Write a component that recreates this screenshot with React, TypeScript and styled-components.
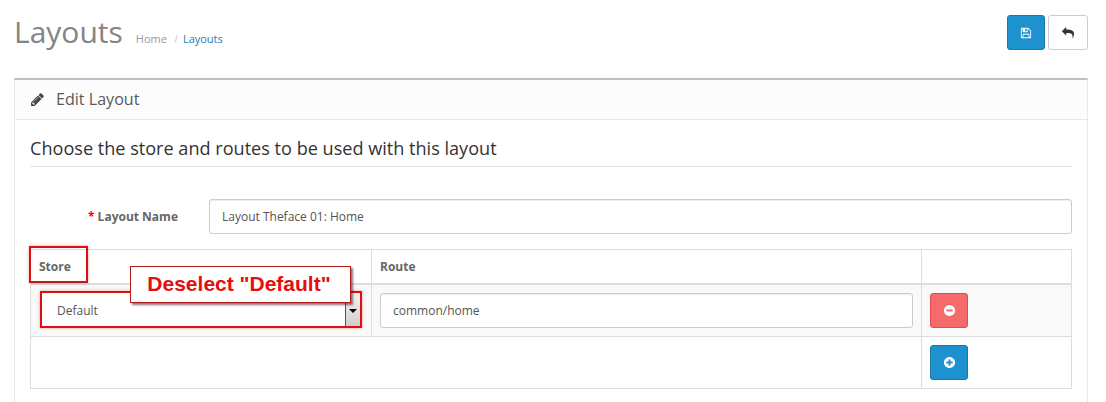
import React from 'react';
import styled, { createGlobalStyle, css } from 'styled-components';

const GlobalStyle = createGlobalStyle`
  *, *::before, *::after { box-sizing: border-box; }
  body {
    margin: 0;
    background: #fff;
    color: #666;
    font: 12px/20px "Open Sans", "Noto Sans", sans-serif;
    overflow: hidden;
  }
`;

const ICONS = {
  save: 'M512 1536h768v-384h-768v384zm896 0h128v-896q0-14-10-38.5t-20-34.5l-281-281q-10-10-34-20t-39-10v416q0 40-28 68t-68 28h-576q-40 0-68-28t-28-68v-416h-128v1280h128v-416q0-40 28-68t68-28h832q40 0 68 28t28 68v416zm-384-928v-320q0-13-9.5-22.5t-22.5-9.5h-192q-13 0-22.5 9.5t-9.5 22.5v320q0 13 9.5 22.5t22.5 9.5h192q13 0 22.5-9.5t9.5-22.5zm640 32v928q0 40-28 68t-68 28h-1344q-40 0-68-28t-28-68v-1344q0-40 28-68t68-28h928q40 0 88 20t76 48l280 280q28 28 48 76t20 88z',
  reply: 'M1792 1120q0 166-127 451-3 7-10.5 24t-13.5 30-13 22q-12 17-28 17-15 0-23.5-10t-8.5-25q0-9 2.5-26.5t2.5-23.5q5-68 5-123 0-101-17.5-181t-48.5-138.5-80-101-105.5-69.5-133-42.5-154-21.5-175.5-6h-224v256q0 26-19 45t-45 19-45-19l-512-512q-19-19-19-45t19-45l512-512q19-19 45-19t45 19 19 45v256h224q713 0 875 403 53 134 53 333z',
  pencil: 'M491 1536l91-91-235-235-91 91v107h128v128h107zm523-928q0-22-22-22-10 0-17 7l-542 542q-7 7-7 17 0 22 22 22 10 0 17-7l542-542q7-7 7-17zm-54-192l416 416-832 832h-416v-416zm683 96q0 53-37 90l-166 166-416-416 166-165q36-38 90-38 53 0 91 38l235 234q37 39 37 91z',
  minus: 'M1344 960v-128q0-26-19-45t-45-19h-768q-26 0-45 19t-19 45v128q0 26 19 45t45 19h768q26 0 45-19t19-45zm320-64q0 209-103 385.5t-279.5 279.5-385.5 103-385.5-103-279.5-279.5-103-385.5 103-385.5 279.5-279.5 385.5-103 385.5 103 279.5 279.5 103 385.5z',
  plus: 'M1344 960v-128q0-26-19-45t-45-19h-256v-256q0-26-19-45t-45-19h-128q-26 0-45 19t-19 45v256h-256q-26 0-45 19t-19 45v128q0 26 19 45t45 19h256v256q0 26 19 45t45 19h128q26 0 45-19t19-45v-256h256q26 0 45-19t19-45zm320-64q0 209-103 385.5t-279.5 279.5-385.5 103-385.5-103-279.5-279.5-103-385.5 103-385.5 279.5-279.5 385.5-103 385.5 103 279.5 279.5 103 385.5z',
};

const Icon = ({ name, size = 13 }: { name: keyof typeof ICONS; size?: number }) => (
  <svg width={size} height={size} viewBox="0 0 1792 1792" fill="currentColor" aria-hidden="true">
    <path d={ICONS[name]} />
  </svg>
);

const Page = styled.main`
  width: 1106px;
  height: 402px;
  padding: 15px 18px 0 14px;
  overflow: hidden;
`;

const PageHeader = styled.header`
  display: flex;
  align-items: flex-start;
  height: 63px;
`;

const Title = styled.h1`
  margin: 0;
  font-size: 30px;
  line-height: 34px;
  font-weight: 400;
  color: #848484;
`;

const Breadcrumb = styled.nav`
  display: flex;
  margin: 14px 0 0 13px;
  font-size: 11px;
  color: #999;
`;

const Separator = styled.span`
  width: 16px;
  padding-left: 7px;
  color: #ccc;
`;

const Crumb = styled.a<{ $active?: boolean }>`
  color: ${p => (p.$active ? '#1e7bb5' : '#999')};
`;

const Actions = styled.div`
  display: flex;
  gap: 3px;
  margin-left: auto;
`;

const tones = {
  primary: css`color: #fff; background: #1e91cf; border-color: #1978ab;`,
  danger: css`color: #fff; background: #f56b6b; border-color: #e44c4c;`,
  plain: css`color: #333; background: #fff; border-color: #ccc;`,
};

const Button = styled.button<{ $tone: keyof typeof tones }>`
  display: flex;
  align-items: center;
  justify-content: center;
  width: ${p => (p.$tone === 'plain' ? 40 : 38)}px;
  height: 35px;
  padding: 0;
  border: 1px solid;
  border-radius: 3px;
  ${p => tones[p.$tone]}
`;

const Panel = styled.section`
  height: 400px;
  border: 1px solid #e8e8e8;
  border-top: 2px solid #bfbfbf;
`;

const PanelHeading = styled.div`
  display: flex;
  align-items: center;
  gap: 11px;
  height: 40px;
  padding-left: 15px;
  border-bottom: 1px solid #e8e8e8;
  background: #fcfcfc;
  color: #444;
`;

const PanelTitle = styled.h3`
  margin: -2px 0 0;
  font-size: 16.1px;
  font-weight: 400;
  color: #595959;
`;

const PanelBody = styled.div`
  padding: 15px 15px 0;
`;

const Legend = styled.h2`
  height: 32px;
  margin: 0 0 32px;
  border-bottom: 1px solid #e5e5e5;
  font-size: 18.1px;
  line-height: 27px;
  font-weight: 400;
  color: #333;
`;

const FormRow = styled.div`
  display: grid;
  grid-template-columns: 148px 1fr;
  column-gap: 31px;
  align-items: center;
  margin-bottom: 15px;
`;

const Label = styled.label`
  text-align: right;
  font-weight: 700;
`;

const Required = styled.span`
  color: #f00;
`;

const TextInput = styled.input`
  display: block;
  width: 100%;
  height: 35px;
  padding: 0 12px;
  border: 1px solid #ccc;
  border-radius: 3px;
  background: #fff;
  box-shadow: inset 0 1px 1px rgba(0, 0, 0, 0.075);
  color: #555;
  font: inherit;
`;

const Table = styled.div`
  position: relative;
  border: 1px solid #ddd;
`;

const Row = styled.div<{ $kind?: 'head' | 'striped' }>`
  display: grid;
  grid-template-columns: 341px 550px 1fr;
  height: ${p => (p.$kind === 'head' ? 35 : p.$kind === 'striped' ? 52 : 51)}px;
  border-bottom: ${p => (p.$kind === 'head' ? '2px' : p.$kind ? '1px' : '0')} solid #ddd;
  background: ${p => (p.$kind === 'striped' ? '#f9f9f9' : '#fff')};
  font-weight: ${p => (p.$kind === 'head' ? 700 : 400)};
`;

const Cell = styled.div<{ $wide?: boolean }>`
  display: flex;
  align-items: center;
  grid-column: ${p => (p.$wide ? 'span 2' : 'auto')};
  padding: 0 8px;
  border-right: 1px solid #ddd;

  &:last-child { border-right: 0; }
`;

const SelectBox = styled.div`
  display: flex;
  justify-content: space-between;
  width: 322px;
  height: 37px;
  margin: -2px 0 0 1px;
  padding-left: 15px;
  border: 2px solid #dc1010;
  background: #fff;
  box-shadow: 0 0 3px rgba(220, 16, 16, 0.4);
  line-height: 36px;
  color: #555;
`;

const SelectArrow = styled.span`
  display: flex;
  align-items: center;
  justify-content: center;
  width: 15px;
  border-left: 1px solid #555;
  background: linear-gradient(#f4f4f4, #cfcfcf);

  &::before {
    content: '';
    margin-top: 3px;
    border: 4px solid transparent;
    border-top-color: #000;
    border-bottom: 0;
  }
`;

const Highlight = styled.div`
  position: absolute;
  top: -4px;
  left: -2px;
  width: 59px;
  height: 37px;
  border: 2px solid #dc1010;
  border-bottom-color: #b51c1c;
  box-shadow: 0 0 3px rgba(220, 16, 16, 0.4);
`;

const Callout = styled.div`
  position: absolute;
  top: 16px;
  left: 99px;
  width: 221px;
  height: 37px;
  padding-right: 3px;
  border: 1px solid #b01c1c;
  background: #fff;
  box-shadow: 2px 2px 2px rgba(70, 20, 20, 0.6);
  color: #e60d0d;
  font: 700 21px/34px "Liberation Sans", Arial, sans-serif;
  text-align: center;
  white-space: nowrap;
`;

export default function App() {
  return (
    <>
      <GlobalStyle />
      <Page>
        <PageHeader>
          <Title>Layouts</Title>
          <Breadcrumb>
            <Crumb>Home</Crumb>
            <Separator>/</Separator>
            <Crumb $active>Layouts</Crumb>
          </Breadcrumb>
          <Actions>
            <Button $tone="primary" aria-label="Save"><Icon name="save" size={12} /></Button>
            <Button $tone="plain" aria-label="Back"><Icon name="reply" size={12} /></Button>
          </Actions>
        </PageHeader>
        <Panel>
          <PanelHeading>
            <Icon name="pencil" size={15} />
            <PanelTitle>Edit Layout</PanelTitle>
          </PanelHeading>
          <PanelBody>
            <Legend>Choose the store and routes to be used with this layout</Legend>
            <FormRow>
              <Label htmlFor="layout-name"><Required>*</Required> Layout Name</Label>
              <TextInput id="layout-name" defaultValue="Layout Theface 01: Home" />
            </FormRow>
            <Table>
              <Row $kind="head">
                <Cell>Store</Cell>
                <Cell>Route</Cell>
                <Cell />
              </Row>
              <Row $kind="striped">
                <Cell>
                  <SelectBox>Default<SelectArrow /></SelectBox>
                </Cell>
                <Cell><TextInput defaultValue="common/home" aria-label="Route" /></Cell>
                <Cell><Button $tone="danger" aria-label="Remove"><Icon name="minus" /></Button></Cell>
              </Row>
              <Row>
                <Cell $wide />
                <Cell><Button $tone="primary" aria-label="Add"><Icon name="plus" /></Button></Cell>
              </Row>
              <Highlight />
              <Callout>Deselect "Default"</Callout>
            </Table>
          </PanelBody>
        </Panel>
      </Page>
    </>
  );
}
